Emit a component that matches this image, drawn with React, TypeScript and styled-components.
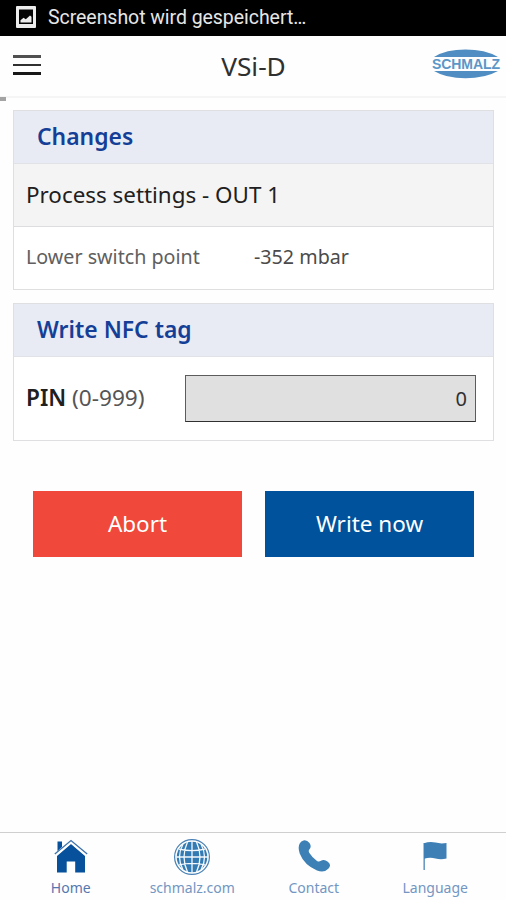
import React from 'react';
import styled, { createGlobalStyle } from 'styled-components';

const GlobalStyle = createGlobalStyle`
  * { box-sizing: border-box; }
  body { margin: 0; background: #fff; font-family: "Noto Sans", "Open Sans", sans-serif; }
`;

const Screen = styled.div`
  display: flex;
  flex-direction: column;
  width: 506px;
  height: 900px;
  overflow: hidden;
  background: #fefefe;
`;

const StatusBar = styled.div`
  display: flex;
  align-items: center;
  gap: 12px;
  flex: none;
  height: 36px;
  padding: 0 16px 2px;
  background: #000;
  color: #e6e6e6;
  font: 400 19.5px/35px Roboto, sans-serif;
  white-space: nowrap;
`;

const StatusText = styled.span`
  letter-spacing: -0.05px;
`;

const Header = styled.header`
  display: grid;
  grid-template-columns: 72px 1fr 72px;
  align-items: center;
  position: relative;
  flex: none;
  height: 62px;
  padding: 0 5px 0 13px;
  border-bottom: 2px solid #f5f5f5;
`;

const MenuButton = styled.button`
  display: flex;
  flex-direction: column;
  gap: 6px;
  width: 28px;
  padding: 0;
  margin-bottom: 2px;
  border: 0;
  background: none;
`;

const MenuBar = styled.span<{ $color: string }>`
  height: 2.5px;
  background: ${(p) => p.$color};
`;

const Title = styled.h1`
  margin: 0;
  padding: 0 7px 1px 0;
  font-size: 26.3px;
  line-height: 36px;
  font-weight: 400;
  color: #303030;
  text-align: center;
`;

const LogoSlot = styled.div`
  display: flex;
  justify-content: flex-end;
  margin: 0 0 4px;
`;

const ScrollMark = styled.div`
  position: absolute;
  left: 0;
  top: 61px;
  width: 6px;
  height: 4px;
  background: #a3a3a3;
`;

const Content = styled.main`
  display: flex;
  flex-direction: column;
  flex: 1;
  gap: 13px;
  padding: 12px 12px 0 13px;
`;

const Card = styled.section`
  border: 1px solid #dfdfe1;
  background: #fff;
`;

const CardHeading = styled.h2`
  height: 53px;
  margin: 0;
  padding: 0 23px;
  border-bottom: 1px solid #e1e2e8;
  background: #e8ebf4;
  color: #153f97;
  font-size: 22.9px;
  line-height: 52px;
  font-weight: 620;
`;

const GroupTitle = styled.div`
  height: 63px;
  padding: 0 12px;
  border-bottom: 1px solid #dddddf;
  background: #f4f4f4;
  color: #202020;
  font-size: 22.4px;
  line-height: 61px;
`;

const ChangeRow = styled.div`
  display: grid;
  grid-template-columns: 228px 1fr;
  height: 62px;
  padding: 0 12px;
  color: #606060;
  font-size: 19.7px;
  line-height: 59px;
`;

const ChangeValue = styled.span`
  color: #4b4b4b;
`;

const PinRow = styled.div`
  display: flex;
  align-items: center;
  justify-content: space-between;
  height: 83px;
  padding: 0 17px 0 12px;
`;

const PinLabel = styled.label`
  padding-bottom: 2px;
  color: #555;
  font-size: 22.6px;
  b { color: #202020; font-weight: 650; }
`;

const PinInput = styled.input`
  width: 291px;
  height: 47px;
  padding: 0 8px;
  border: 1px solid #5c5c5c;
  border-bottom-color: #303030;
  border-radius: 0;
  background: #e0e0e0;
  color: #303030;
  font: 400 20px "Noto Sans", sans-serif;
  text-align: right;
  outline: none;
`;

const Actions = styled.div`
  display: grid;
  grid-template-columns: 209px 209px;
  gap: 23px;
  margin: 37px 0 0 20px;
`;

const ActionButton = styled.button<{ $color: string }>`
  height: 66px;
  padding: 0 0 1px;
  border: 0;
  background: ${(p) => p.$color};
  color: #fff;
  font: 400 22.5px "Noto Sans", sans-serif;
`;

const BottomNav = styled.nav`
  display: grid;
  grid-template-columns: repeat(4, 1fr);
  flex: none;
  height: 68px;
  padding: 0 10px;
  border-top: 1.5px solid #cfcfcf;
`;

const NavItem = styled.a<{ $active?: boolean }>`
  display: flex;
  flex-direction: column;
  align-items: center;
  padding-top: 6px;
  color: ${(p) => (p.$active ? '#5577b0' : '#7396c2')};
  font-size: 14px;
  line-height: 20px;
  svg { display: block; margin-bottom: 3px; }
`;

const PictureIcon = () => (
  <svg width="20" height="22" viewBox="0 0 20 22">
    <rect width="20" height="22" rx="1" fill="#ededed" />
    <rect x="3" y="3.5" width="14" height="14.5" fill="#050505" />
    <path d="M4.500 16.500v-2.200l3-2.500 2.300 1.500 4.200-3.700 1.500 1.200v5.700z" fill="#ededed" />
  </svg>
);

const SchmalzLogo = () => (
  <svg width="70" height="30" viewBox="0 0 70 30">
    <path d="M3 8Q15 .6 34.500 .6T67 8Z M3 22H67Q54 29.300 34.500 29.300T3 22Z" fill="#4f8dc2" />
    <text x="1" y="20" textLength="68" lengthAdjust="spacing" fontFamily="Liberation Sans, sans-serif" fontWeight="700" fontSize="14" fill="#5c96c7">SCHMALZ</text>
  </svg>
);

const HomeIcon = () => (
  <svg width="34" height="36" viewBox="0 0 34 36">
    <path d="M3.500 2.500h4.500v5.500l-4.500 4zM17 5 31 17V33.500H21.200V22.500h-8.500V33.500H3V17z" fill="#07509b" />
    <path d="M1.500 16.500 17 3.600l15.500 12.900" fill="none" stroke="#fff" strokeWidth="1.500" />
    <path d="M.8 15 17 1.500l16.200 13.500" fill="none" stroke="#3d72ad" strokeWidth="1.300" />
  </svg>
);

const GlobeIcon = () => (
  <svg width="38" height="36" viewBox="0 0 38 36">
    <circle cx="19" cy="18" r="17.400" fill="#fff" stroke="#4b82b5" strokeWidth="1.200" />
    <circle cx="19" cy="18" r="15.300" fill="#357bb3" />
    <path d="M19 2v32M3 18h32M6 10.200q13 3 26 0M6 25.800q13-3 26 0M14.500 3q-7 15 0 30M23.500 3q7 15 0 30M10 5q-7 13 0 26M28 5q7 13 0 26" fill="none" stroke="#f4f9fd" strokeWidth="1.300" />
  </svg>
);

const PhoneIcon = () => (
  <svg width="34" height="36" viewBox="0 0 34 36">
    <path d="M6.500 1.400Q10 .7 12.500 4q2.500 3.600-.2 6.500-1.200 1.300.1 3.400 3.100 4.900 7.600 8 1.900 1.200 3.500.2 3.500-2.400 7.300.6 4.200 3.400.5 7-4.400 4.600-11.300 1.700Q7.300 26.200 2.700 14.500-.6 4 6.500 1.400Z" fill="#3c80b5" />
  </svg>
);

const FlagIcon = () => (
  <svg width="26" height="36" viewBox="0 0 26 36">
    <path d="M2.200 4v27" stroke="#6b9ac4" strokeWidth="1.600" />
    <path d="M2 4.200q6-2 11.500-.6 5.500 1.400 11 .3V19.500q-5.500 1.300-11 0-5.500-1.500-11.500.2z" fill="#3e80b6" />
  </svg>
);

const navItems = [
  { label: 'Home', Icon: HomeIcon, active: true },
  { label: 'schmalz.com', Icon: GlobeIcon },
  { label: 'Contact', Icon: PhoneIcon },
  { label: 'Language', Icon: FlagIcon },
];

export default function App() {
  return (
    <>
      <GlobalStyle />
      <Screen>
        <StatusBar>
          <PictureIcon />
          <StatusText>Screenshot wird gespeichert…</StatusText>
        </StatusBar>
        <Header>
          <MenuButton aria-label="Menu">
            <MenuBar $color="#505050" />
            <MenuBar $color="#303030" />
            <MenuBar $color="#181818" />
          </MenuButton>
          <Title>VSi-D</Title>
          <LogoSlot><SchmalzLogo /></LogoSlot>
          <ScrollMark />
        </Header>
        <Content>
          <Card>
            <CardHeading>Changes</CardHeading>
            <GroupTitle>Process settings - OUT 1</GroupTitle>
            <ChangeRow>
              <span>Lower switch point</span>
              <ChangeValue>-352 mbar</ChangeValue>
            </ChangeRow>
          </Card>
          <Card>
            <CardHeading>Write NFC tag</CardHeading>
            <PinRow>
              <PinLabel htmlFor="pin"><b>PIN</b> (0-999)</PinLabel>
              <PinInput id="pin" defaultValue="0" />
            </PinRow>
          </Card>
          <Actions>
            <ActionButton $color="#f0483a">Abort</ActionButton>
            <ActionButton $color="#00529c">Write now</ActionButton>
          </Actions>
        </Content>
        <BottomNav>
          {navItems.map(({ label, Icon, active }) => (
            <NavItem key={label} $active={active}>
              <Icon />
              {label}
            </NavItem>
          ))}
        </BottomNav>
      </Screen>
    </>
  );
}
